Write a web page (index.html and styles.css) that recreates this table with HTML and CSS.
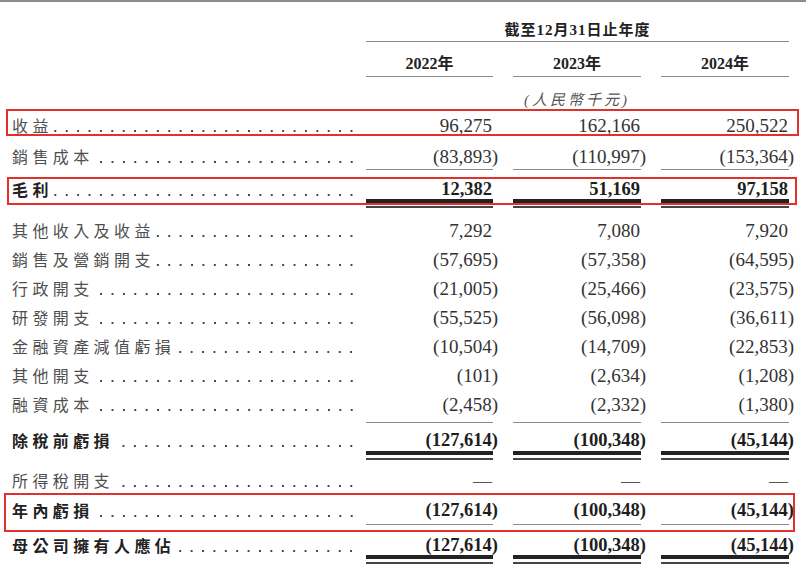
FILE: index.html
```html
<!DOCTYPE html>
<html lang="zh-Hant">
<head>
<meta charset="utf-8">
<title>綜合損益表</title>
<link rel="stylesheet" href="styles.css">
</head>
<body>
<div class="sheet">
  <div class="grid h-period"><div></div><div class="period">截至12月31日止年度</div></div>
  <div class="grid h-years"><div></div><div class="year">2022年</div><div class="year">2023年</div><div class="year">2024年</div></div>
  <div class="grid h-unit"><div></div><div></div><div class="unit">(人民幣千元)</div><div></div></div>

  <div class="grid row r-rev boxed">
    <div class="label"><span class="lt">收益</span><span class="dots"></span></div>
    <div class="num">96,275</div><div class="num">162,166</div><div class="num">250,522</div>
  </div>
  <div class="grid row r-cost">
    <div class="label"><span class="lt">銷售成本</span><span class="dots"></span></div>
    <div class="num">(83,893<span class="rp">)</span></div><div class="num">(110,997<span class="rp">)</span></div><div class="num">(153,364<span class="rp">)</span></div>
  </div>
  <div class="grid row r-gross boxed bold">
    <div class="label"><span class="lt">毛利</span><span class="dots"></span></div>
    <div class="num">12,382</div><div class="num">51,169</div><div class="num">97,158</div>
  </div>
  <div class="grid row r-other">
    <div class="label"><span class="lt">其他收入及收益</span><span class="dots"></span></div>
    <div class="num">7,292</div><div class="num">7,080</div><div class="num">7,920</div>
  </div>
  <div class="grid row">
    <div class="label"><span class="lt">銷售及營銷開支</span><span class="dots"></span></div>
    <div class="num">(57,695<span class="rp">)</span></div><div class="num">(57,358<span class="rp">)</span></div><div class="num">(64,595<span class="rp">)</span></div>
  </div>
  <div class="grid row">
    <div class="label"><span class="lt">行政開支</span><span class="dots"></span></div>
    <div class="num">(21,005<span class="rp">)</span></div><div class="num">(25,466<span class="rp">)</span></div><div class="num">(23,575<span class="rp">)</span></div>
  </div>
  <div class="grid row">
    <div class="label"><span class="lt">研發開支</span><span class="dots"></span></div>
    <div class="num">(55,525<span class="rp">)</span></div><div class="num">(56,098<span class="rp">)</span></div><div class="num">(36,611<span class="rp">)</span></div>
  </div>
  <div class="grid row">
    <div class="label"><span class="lt">金融資產減值虧損</span><span class="dots"></span></div>
    <div class="num">(10,504<span class="rp">)</span></div><div class="num">(14,709<span class="rp">)</span></div><div class="num">(22,853<span class="rp">)</span></div>
  </div>
  <div class="grid row">
    <div class="label"><span class="lt">其他開支</span><span class="dots"></span></div>
    <div class="num">(101<span class="rp">)</span></div><div class="num">(2,634<span class="rp">)</span></div><div class="num">(1,208<span class="rp">)</span></div>
  </div>
  <div class="grid row r-fin">
    <div class="label"><span class="lt">融資成本</span><span class="dots"></span></div>
    <div class="num">(2,458<span class="rp">)</span></div><div class="num">(2,332<span class="rp">)</span></div><div class="num">(1,380<span class="rp">)</span></div>
  </div>
  <div class="grid row r-pbt bold">
    <div class="label"><span class="lt">除稅前虧損</span><span class="dots"></span></div>
    <div class="num">(127,614<span class="rp">)</span></div><div class="num">(100,348<span class="rp">)</span></div><div class="num">(45,144<span class="rp">)</span></div>
  </div>
  <div class="grid row r-tax">
    <div class="label"><span class="lt">所得稅開支</span><span class="dots"></span></div>
    <div class="num dash">—</div><div class="num dash">—</div><div class="num dash">—</div>
  </div>
  <div class="grid row r-loss boxed bold">
    <div class="label"><span class="lt">年內虧損</span><span class="dots"></span></div>
    <div class="num">(127,614<span class="rp">)</span></div><div class="num">(100,348<span class="rp">)</span></div><div class="num">(45,144<span class="rp">)</span></div>
  </div>
  <div class="grid row r-owner bold">
    <div class="label"><span class="lt">母公司擁有人應佔</span><span class="dots"></span></div>
    <div class="num">(127,614<span class="rp">)</span></div><div class="num">(100,348<span class="rp">)</span></div><div class="num">(45,144<span class="rp">)</span></div>
  </div>
</div>
</body>
</html>
```

FILE: styles.css
```css
* { box-sizing: border-box; }
html, body { margin: 0; padding: 0; background: #fff; }
body {
  width: 806px;
  height: 578px;
  overflow: hidden;
  border-top: 2px solid #8c8c8c;
  font-family: "Liberation Serif", "Noto Sans CJK TC", serif;
  color: #333;
}

.grid {
  display: grid;
  grid-template-columns: 1fr 127px 128px 128px;
  column-gap: 20px;
  padding: 0 17px 0 12px;
  position: relative;
}

/* header */
.h-period { margin-top: 16.5px; }
.period {
  grid-column: 2 / 5;
  text-align: center;
  font-weight: bold;
  font-size: 15px;
  line-height: 22px;
  letter-spacing: 1px;
  color: #222;
  border-bottom: 1.5px solid #8a8a8a;
}
.h-years { margin-top: 11px; }
.year {
  text-align: center;
  font-weight: bold;
  font-size: 16px;
  line-height: 22px;
  padding-bottom: 1px;
  color: #222;
  border-bottom: 1.5px solid #8a8a8a;
}
.h-unit { margin-top: 12px; }
.unit {
  text-align: center;
  font-style: italic;
  font-size: 15px;
  line-height: 22px;
  letter-spacing: 3px;
  color: #555;
}

/* rows */
.row { align-items: start; }
.label {
  display: flex;
  margin-right: -11px;
  font-family: "Noto Sans CJK TC", sans-serif;
  font-size: 16px;
  line-height: 29px;
  letter-spacing: 4.4px;
  color: #4f4f4f;
}
.lt { white-space: nowrap; }
.dots {
  flex: 1;
  height: 29px;
  background-image: radial-gradient(circle at center, #444 0, #444 0.95px, rgba(68,68,68,0) 1.4px);
  background-size: 11.4px 4px;
  background-repeat: repeat-x;
  background-position: right 0 top 18px;
}
.num {
  text-align: right;
  font-size: 19px;
  line-height: 29px;
  padding-right: 1px;
  white-space: nowrap;
  color: #333;
}
.rp { margin-right: -6px; }
.dash { color: #555; }

.bold .label { font-weight: bold; color: #222; }
.bold .num { font-weight: bold; font-size: 18.5px; color: #1e1e1e; }

/* spacing + rules */
.r-rev { margin-top: 0.5px; }
.r-cost { margin-top: 2px; }
.r-cost .num { height: 27.5px; border-bottom: 1.5px solid #8a8a8a; }
.r-gross { margin-top: 4px; }
.r-gross .num {
  height: 33px;
  background:
    linear-gradient(#222, #222) left 0 bottom 5.3px / 100% 4px no-repeat,
    linear-gradient(#444, #444) left 0 bottom 0 / 100% 2px no-repeat;
}
.r-other { margin-top: 8px; }
.r-fin .num { height: 32.5px; border-bottom: 1.5px solid #8a8a8a; }
.r-pbt { margin-top: 3.5px; }
.r-pbt .num {
  height: 34px;
  background:
    linear-gradient(#222, #222) left 0 bottom 5.5px / 100% 4px no-repeat,
    linear-gradient(#444, #444) left 0 bottom 0 / 100% 2px no-repeat;
}
.r-tax { margin-top: 6px; }
.r-loss { margin-top: 1px; }
.r-loss .num { height: 29px; border-bottom: 1.5px solid #8a8a8a; }
.r-owner { margin-top: 6px; }
.r-owner .num {
  height: 33px;
  background:
    linear-gradient(#222, #222) left 0 bottom 5.5px / 100% 4px no-repeat,
    linear-gradient(#444, #444) left 0 bottom 0 / 100% 2px no-repeat;
}

/* red annotation boxes */
.boxed::after {
  content: "";
  position: absolute;
  border: 2px solid #e2312c;
  pointer-events: none;
}
.r-rev::after { left: 6px; right: 7px; top: -2px; bottom: 4px; }
.r-gross::after { left: 7px; right: 9px; top: 2px; bottom: 3px; }
.r-loss::after { left: 4px; right: 11px; top: -3px; bottom: -7px; }
```
